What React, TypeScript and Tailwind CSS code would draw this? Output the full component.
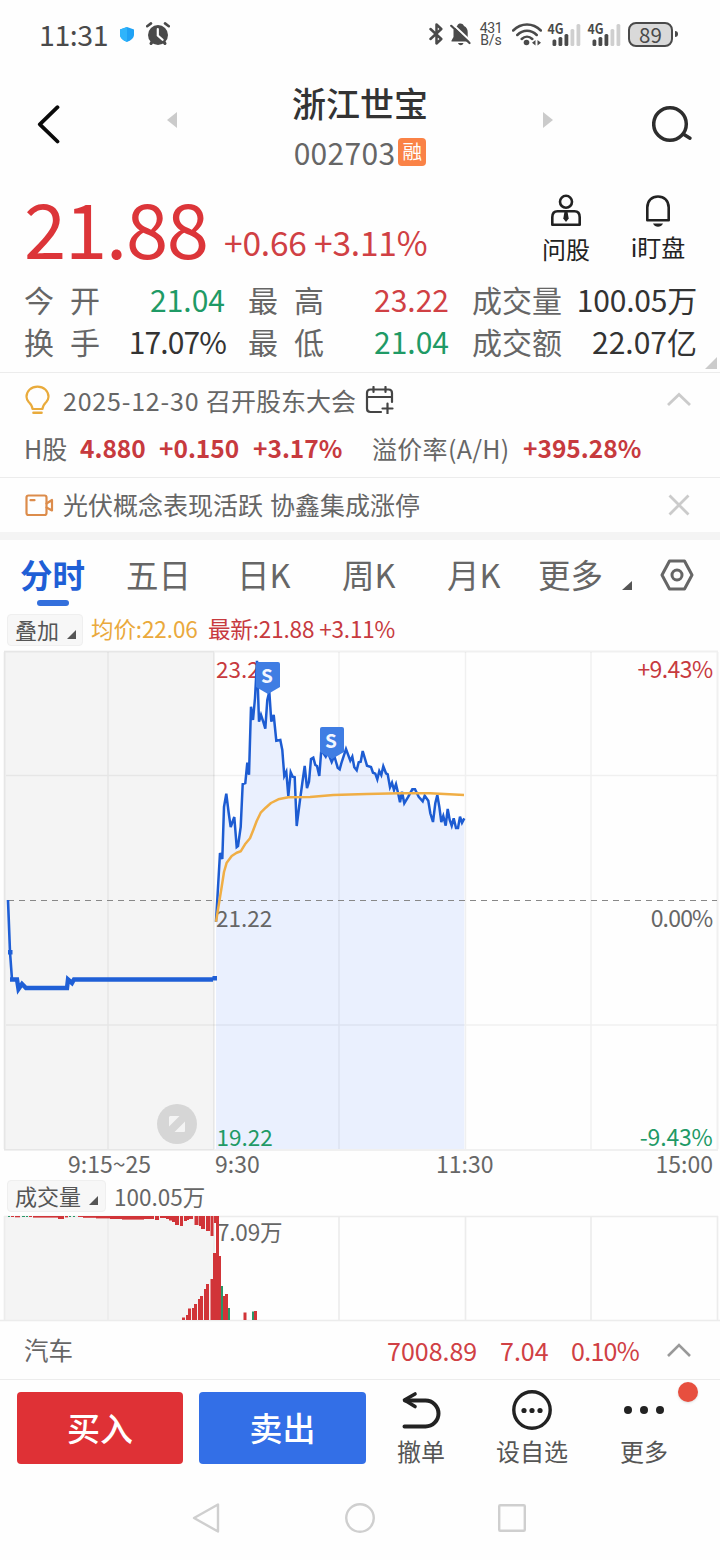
import React from 'react';
import clsx from 'clsx';

// [x, y] points of the price line after the open
const PRICE_LINE =
  '216,921.7 220,853 222.3,859 224,807 226.3,793.7 228.7,813 230.7,827 234.3,817 236.7,847 238,846 240.7,827 242.7,784 245.3,783 247.3,762.7 249,774.7 251,706.7 253,720 255,698 257,660.7 259,721.7 261,715 263,721 265.3,728.7 267.3,700 269.3,691.7 271.3,721.7 273.7,715 276.3,740.7 280.3,740 282.3,750 284.3,776 286.3,771.7 288.3,796 290.7,772.3 292.7,776.7 294.7,777.3 296.7,826 300,800 302.3,783 304.7,766 307,788 309,781.7 311,759 313.3,757.7 315.3,765 317,766 319.3,776 321.3,750 323.3,753 325.7,756.7 327.7,752 331.7,762 334.3,756 337.7,767.7 339.7,769.3 341.7,762 346,749 350.3,760.7 352.3,756.7 354.3,767.3 356.7,770.3 358.7,762.3 360.7,761.7 362.7,751 367,765.7 371,767 373,772.7 375.3,773.7 377.3,779.3 379.3,771 381.3,775 383.3,766.3 386,773.3 387.7,774.3 390,787.3 392,782.7 394,790 396,784.3 398.3,794 400,802.3 402,791.7 404.3,803.3 408.3,796.7 412.3,789.3 415,789.3 418.7,796.7 422.7,801.3 424.7,795.7 428.3,800.7 430.3,813.3 433,822 435.3,803.3 437.3,795 439.3,806.7 441.3,822 443.3,816 445.7,825.7 447.7,809 449.7,820 451.7,825.7 453.7,818.3 456,828 458,828 460,816.7 462,822.7 464.3,818.3';

const AVERAGE_LINE =
  '216,921.7 221.7,886.7 224,872 226.7,862.7 231.7,856 236.7,852.7 240.7,851.3 245,844.3 250,838.3 253.3,830 256.7,821 260.7,812.7 265.7,807.7 271,803 278.3,799.3 288.3,797.3 310,797 333.3,795 366.7,794 400,793.3 430,793.3 464,795';

const RED = '#d13438';
const GREEN = '#2a9668';

// x, width, height, colour, standing on the bottom edge
const VOLUME_BARS: [number, number, number, string][] = [
  [182, 3, 2.5, RED], [186, 2, 5, RED], [188, 3, 11.5, RED], [192, 2, 12, RED], [194, 3, 16, RED],
  [198, 2, 21, RED], [200, 3, 24, RED], [204, 2, 31, RED], [206, 3, 36, RED], [210.5, 3, 41, RED],
  [213, 3, 67, RED], [216, 3, 104, RED], [219, 2, 64, RED], [221, 2, 34, GREEN], [223, 2, 24, RED],
  [225, 3, 26, RED], [228, 2, 12, GREEN], [243.5, 3, 7.5, RED], [252, 2, 8.5, GREEN], [254, 3, 9, RED],
];

// x, width, depth, colour, hanging from the top edge
const AUCTION_BARS: [number, number, number, string][] = [
  [8, 2, 1, GREEN], [11, 3, 1, RED], [15, 5, 1.3, RED], [22, 3, 1, GREEN], [26, 2, 1, GREEN], [29, 3, 1, RED],
  [33, 25, 1.6, RED], [58, 6, 3, RED], [65, 3, 1.4, RED], [69, 2, 1, GREEN], [73, 2, 1, GREEN], [78, 5, 1, RED],
  [83, 13, 1.8, RED], [96, 14, 2.4, RED], [110, 12, 3, RED], [122, 22, 3.6, RED], [144, 10, 3, RED],
  [155, 4, 4, RED], [160, 6, 2, RED], [166, 3, 3, RED], [169, 3, 4.5, RED], [172, 3, 6, RED],
  [175, 4, 9, RED], [180, 3, 10, RED], [184, 3, 5, RED], [187, 2, 4, RED], [189, 4, 3, RED], [194.5, 4, 9, RED],
  [199, 2, 10, RED], [201, 4, 13, RED], [206, 4, 15, RED], [210.5, 3, 20, RED], [214, 2, 7, RED],
];

function StatusBar() {
  return (
    <header className="flex h-[68px] shrink-0 items-center pl-[39px] pr-[42px] text-[#4a4a4a]">
      <span className="w-[69px] text-[28.5px] font-normal leading-none tracking-[-0.4px]">11:31</span>
      <svg className="ml-[12px]" width="14" height="15" viewBox="0 0 14 15">
        <path d="M7 0 14 2.6v5C14 11 11 13.600 7 15 3 13.600 0 11 0 7.600v-5z" fill="#1fa2f5" />
        <path d="M7 0v15C3 13.600 0 11 0 7.600v-5z" fill="#2fb4fb" />
      </svg>
      <svg className="ml-[12px]" width="24" height="24" viewBox="0 0 24 24" fill="none">
        <circle cx="12" cy="13" r="10" fill="#4a4a4a" />
        <path d="M5 21.500 6.500 19.500M19 21.500l-1.500-2" stroke="#4a4a4a" strokeWidth="3" strokeLinecap="round" />
        <path d="M1.200 4.200 5 1.400M22.800 4.200 19 1.400" stroke="#4a4a4a" strokeWidth="2.600" strokeLinecap="round" />
        <path d="M11.800 7v6.500l4.800 4.300" stroke="#fff" strokeWidth="2.200" strokeLinecap="round" />
      </svg>
      <div className="ml-auto flex items-center">
        <svg width="14" height="22" viewBox="0 0 14 22" fill="none" stroke="#4a4a4a" strokeWidth="2.500" strokeLinejoin="round" strokeLinecap="round">
          <path d="M1.500 6 12.300 16 7.500 20.500V1.500L12.300 6 1.500 16" />
        </svg>
        <svg className="ml-[7px]" width="21" height="23" viewBox="0 0 21 23" fill="none">
          <path d="M3.500 7C4 5 5.500 4 7 3.200 8 1 9 .5 10.500 .5S13 1.200 14 3c2.500 1.200 3.700 3.200 3.700 6v5l2.300 3.500v1H1.500v-1l2-3.500z" fill="#4a4a4a" />
          <path d="M8 20h5.500c-.6 1.600-1.500 2.200-2.700 2.200S8.600 21.600 8 20z" fill="#4a4a4a" />
          <path d="M2.800 1.200 21 18.500" stroke="#fff" strokeWidth="2" />
          <path d="M1.200 2.800 19.500 20" stroke="#4a4a4a" strokeWidth="2.200" strokeLinecap="round" />
        </svg>
        <div className="ml-[8px] flex w-[24px] flex-col items-center font-[Roboto,sans-serif] text-[14px] leading-[12px]">
          <span className="tracking-[-0.300px]">431</span>
          <span>B/s</span>
        </div>
        <svg className="ml-[9px]" width="30" height="23" viewBox="0 0 30 23" fill="none" stroke="#4a4a4a" strokeWidth="2.500" strokeLinecap="round">
          <path d="M1.200 7.500c8-8 19.600-8 27.600 0M5.300 12c5.600-5.600 13.800-5.600 19.400 0M9.700 16c3.200-3 7.400-3 10.600 0" />
          <circle cx="14.500" cy="19.500" r="2.800" fill="#4a4a4a" stroke="none" />
          <path d="M23.500 17v5.500L20 19.700zM25.500 17v5.500l3.500-2.800z" fill="#4a4a4a" stroke="none" />
        </svg>
        <CellSignal className="ml-[6px] overflow-visible" />
        <CellSignal className="ml-[7px] overflow-visible" />
        <div className="ml-[7px] flex h-[25px] w-[45px] items-center justify-center rounded-[8px] border-2 border-[#4a4a4a] bg-[#d9d9d9] text-[20.500px] leading-none">
          <span>89</span>
        </div>
        <div className="ml-[2px] h-[6px] w-[3px] rounded-r bg-[#4a4a4a]" />
      </div>
    </header>
  );
}

function CellSignal({ className }: { className: string }) {
  return (
    <svg className={className} width="33" height="23" viewBox="0 0 33 23">
      <text x="-0.500" y="11" fontSize="14" fontWeight="700" fill="#4a4a4a" textLength="16" lengthAdjust="spacingAndGlyphs">4G</text>
      <rect x="4.500" y="16.500" width="3.800" height="6.500" rx="1.500" fill="#4a4a4a" />
      <rect x="10.500" y="14" width="3.800" height="9" rx="1.500" fill="#4a4a4a" />
      <rect x="16.500" y="11" width="3.800" height="12" rx="1.500" fill="#4a4a4a" />
      <rect x="22.500" y="6" width="3.800" height="17" rx="1.500" fill="#cfcfcf" />
      <rect x="28.500" y="1" width="3.800" height="22" rx="1.500" fill="#cfcfcf" />
    </svg>
  );
}

function TitleBar() {
  return (
    <div className="flex h-[112px] shrink-0 pl-[36px]">
      <svg className="mt-[36px]" width="25" height="40" viewBox="0 0 25 40" fill="none" stroke="#0a0a0a" strokeWidth="3.800" strokeLinecap="round" strokeLinejoin="round">
        <path d="M21.500 3.200 3.800 20.300 21.500 37.500" />
      </svg>
      <div className="ml-[106px] flex w-[386px] justify-between">
        <svg className="mt-[44px]" width="10" height="16" viewBox="0 0 10 16">
          <path d="M10 0v16L0 8z" fill="#cbcbcb" />
        </svg>
        <div className="flex w-[140px] flex-col items-center">
          <h1 className="mt-[18px] text-[34px] font-medium leading-[34px] text-[#333]">浙江世宝</h1>
          <div className="mt-[16px] flex items-center">
            <span className="text-[30px] leading-[32px] tracking-[0.3px] text-[#666]">002703</span>
            <span className="ml-[3px] flex size-[28px] items-center justify-center rounded-[4px] bg-[#fa8246] text-[19.500px] leading-none text-white">
              <span className="-mt-[2px]">融</span>
            </span>
          </div>
        </div>
        <svg className="mt-[44px]" width="10" height="16" viewBox="0 0 10 16">
          <path d="M0 0v16l10-8z" fill="#cbcbcb" />
        </svg>
      </div>
      <svg className="ml-[99px] mt-[37px]" width="42" height="38" viewBox="0 0 42 38" fill="none" stroke="#2d2d2d" strokeWidth="3.500" strokeLinecap="round">
        <circle cx="18" cy="19" r="16.300" />
        <path d="M32 29.500 38 33.200" />
      </svg>
    </div>
  );
}

function Stat({ label, value, spaced, className }: { label: string; value: string; spaced?: boolean; className: string }) {
  return (
    <div className="flex h-[42px] items-center justify-between leading-[42px]">
      <span className={clsx('flex text-[30px] text-[#666]', spaced && 'w-[76px] justify-between')}>
        {spaced ? label.split('').map((c) => <span key={c}>{c}</span>) : label}
      </span>
      <span className={className}>{value}</span>
    </div>
  );
}

function Quote() {
  return (
    <section className="relative h-[193px] shrink-0 border-b border-[#ececec]">
      <div className="flex h-[98px] pl-[24px]">
        <span className="mt-[8px] w-[200px] text-[76px] leading-[76px] tracking-[-1.200px] text-[#dc3539]">21.88</span>
        <span className="mt-[42px] w-[310px] whitespace-pre text-[33.500px] leading-[40px] tracking-[-0.200px] text-[#d04044]">+0.66 +3.11%</span>
        <div className="mt-[14px] flex w-[64px] flex-col items-center">
          <svg width="32" height="34" viewBox="0 0 32 34" fill="none" stroke="#222" strokeWidth="2.600">
            <circle cx="16" cy="7.800" r="6" />
            <path d="M7.500 17.300h17c3.500 0 5.200 2.500 5.200 6v7.400H2.300v-7.400c0-3.500 1.700-6 5.200-6z" strokeLinejoin="round" />
            <path d="M14.500 17.500h3l1.200 7-2.700 3.500-2.700-3.500z" fill="#222" stroke="none" />
          </svg>
          <span className="mt-[9px] text-[24px] leading-[24px] text-[#222]">问股</span>
        </div>
        <div className="ml-[28px] mt-[14px] flex w-[64px] flex-col items-center">
          <svg width="28" height="34" viewBox="0 0 28 34" fill="none" stroke="#222" strokeWidth="2.600" strokeLinejoin="round">
            <path d="M3.300 26.300V13.500C3.300 6.500 8 2.500 14 2.500s10.700 4 10.700 11v12.800z" />
            <path d="M9 29.500h10c-1 2.300-3 3.200-5 3.200s-4-.9-5-3.200z" fill="#222" stroke="none" />
          </svg>
          <span className="mt-[7px] text-[24px] leading-[24px] text-[#222]">i盯盘</span>
        </div>
      </div>
      <div className="grid grid-cols-[201px_201px_225px] gap-x-[23px] pl-[24px]">
        <Stat label="今开" spaced value="21.04" className="text-[30px] text-[#1f9a66]" />
        <Stat label="最高" spaced value="23.22" className="text-[30px] text-[#d04044]" />
        <Stat label="成交量" value="100.05万" className="text-[30px] tracking-[-0.200px] text-[#333]" />
        <Stat label="换手" spaced value="17.07%" className="mr-[-1px] text-[30px] tracking-[-0.900px] text-[#333]" />
        <Stat label="最低" spaced value="21.04" className="text-[30px] text-[#1f9a66]" />
        <Stat label="成交额" value="22.07亿" className="text-[30px] text-[#333]" />
      </div>
      <svg className="absolute bottom-[3px] right-[3px]" width="12" height="12" viewBox="0 0 12 12">
        <path d="M12 0v12H0z" fill="#cbcbcb" />
      </svg>
    </section>
  );
}

function Notices() {
  return (
    <section className="flex shrink-0 flex-col text-[25px] text-[#666]">
      <div className="flex h-[54px] items-center pl-[25px] pr-[28px]">
        <svg width="25" height="30" viewBox="0 0 25 30" fill="none" stroke="#e9ab3c" strokeWidth="2.200" strokeLinecap="round">
          <path d="M7.500 24c0-3-1.800-4.800-3.800-7C2.200 15.200 1.500 13.700 1.500 11.800 1.500 6 6.300 1.600 12.500 1.600S23.500 6 23.500 11.800c0 1.900-.7 3.400-2.200 5.200-2 2.200-3.800 4-3.800 7z" strokeLinejoin="round" />
          <path d="M8.500 27.800h8" strokeWidth="2.600" />
        </svg>
        <span className="ml-[13px] w-[143px] leading-[30px] tracking-[0.800px]">2025-12-30</span>
        <span className="leading-[30px]">召开股东大会</span>
        <svg className="ml-[9px]" width="29" height="28" viewBox="0 0 29 28" fill="none" stroke="#444" strokeWidth="2.200" strokeLinecap="round">
          <path d="M16 26H5.500C3 26 2 25 2 22.500V7c0-2.500 1-3.500 3.500-3.500h18C26 3.500 27 4.500 27 7v9M2 11h25M8.500 1v5M20.500 1v5M17.500 22.500h10M22.500 17.500v10" />
        </svg>
        <svg className="ml-auto mt-[-3px]" width="26" height="16" viewBox="0 0 26 16" fill="none" stroke="#cbcbcb" strokeWidth="2.800">
          <path d="M2 14 13 3.500 24 14" />
        </svg>
      </div>
      <div className="flex h-[51px] items-start border-b border-[#ececec] pl-[24px] pt-[7px] leading-[28px]">
        <span className="w-[56px]">H股</span>
        <span className="w-[79px] text-[24.500px] font-bold text-[#c73a3e]">4.880</span>
        <span className="w-[94px] text-[24.500px] font-bold text-[#c73a3e]">+0.150</span>
        <span className="w-[119px] text-[24.500px] font-bold text-[#c73a3e]">+3.17%</span>
        <span className="w-[151px] tracking-[0.300px]">溢价率(A/H)</span>
        <span className="text-[24.500px] font-bold text-[#c73a3e]">+395.28%</span>
      </div>
      <div className="flex h-[54px] items-center pl-[25px] pr-[28px]">
        <svg width="29" height="23" viewBox="0 0 29 23" fill="none" stroke="#dc8c4b" strokeWidth="2.200" strokeLinecap="round" strokeLinejoin="round">
          <rect x="1.500" y="1.500" width="20" height="19.500" rx="2" />
          <path d="M5.500 6.200h4M21.500 9.500 27 6v10.500L21.500 13.500" />
        </svg>
        <span className="ml-[9px] mt-[-2px] w-[207px] leading-[30px]">光伏概念表现活跃</span>
        <span className="mt-[-2px] leading-[30px]">协鑫集成涨停</span>
        <svg className="ml-auto" width="26" height="24" viewBox="0 0 26 24" fill="none" stroke="#cbcbcb" strokeWidth="2.800">
          <path d="M3.500 2.500 22.500 21.500M22.500 2.500 3.500 21.500" />
        </svg>
      </div>
      <div className="h-[8px] bg-[#f4f4f4]" />
    </section>
  );
}

function ChartTabs() {
  return (
    <nav className="flex h-[74px] shrink-0 pl-[20px] text-[32.500px] leading-[40px] text-[#666]">
      <div className="flex w-[106px] flex-col pt-[14px] font-bold text-[#1f5fd6]">
        <span>分时</span>
        <div className="ml-[17px] mt-[6px] h-[6px] w-[32px] rounded-full bg-[#336fdc]" />
      </div>
      <span className="w-[111px] pt-[14px]">五日</span>
      <span className="w-[105px] pt-[14px]">日K</span>
      <span className="w-[105px] pt-[14px]">周K</span>
      <span className="w-[91px] pt-[14px]">月K</span>
      <span className="w-[84px] pt-[14px]">更多</span>
      <svg className="mt-[41px]" width="10" height="9" viewBox="0 0 10 9">
        <path d="M10 0v9H0z" fill="#555" />
      </svg>
      <svg className="ml-[28px] mt-[19px]" width="34" height="32" viewBox="0 0 34 32" fill="none" stroke="#666" strokeWidth="3">
        <path d="M9.500 2h15L32 16l-7.500 14h-15L2 16z" strokeLinejoin="round" />
        <circle cx="17" cy="16" r="5" />
      </svg>
    </nav>
  );
}

function Picker({ label, className }: { label: string; className: string }) {
  return (
    <div className={clsx('flex h-[32px] items-center rounded-[4px] border border-[#efefef] bg-[#f7f7f7] pl-[7px]', className)}>
      <span className="-mt-[2px] text-[22px] leading-[28px] text-[#555]">{label}</span>
      <svg className="ml-[8px] mt-[8px]" width="9" height="9" viewBox="0 0 9 9">
        <path d="M9 0v9H0z" fill="#555" />
      </svg>
    </div>
  );
}

function SellFlag({ x, y }: { x: number; y: number }) {
  return (
    <g transform={`translate(${x} ${y})`}>
      <path d="M0 2a2 2 0 0 1 2-2h20a2 2 0 0 1 2 2v23L12 32 0 25z" fill="#3f7de3" />
      <text x="11" y="20.500" textAnchor="middle" fontSize="19" fontWeight="700" fill="#f2f6ff">S</text>
    </g>
  );
}

function PriceChart() {
  return (
    <svg className="shrink-0" width="720" height="531" viewBox="0 649 720 531">
      <rect x="4" y="651" width="210" height="499" fill="#f4f4f4" />
      <polygon points={`216,1149 ${PRICE_LINE} 464.300,1149`} fill="#eaf0fe" />
      <g stroke="#000" strokeOpacity="0.055" strokeWidth="2">
        <path d="M4 651.500h714M4 1150h714M4.500 652v497M717.500 652v497M214 652v497" />
        <path d="M108 652v497M339 652v497M465.500 652v497M591 652v497M6 775.500h711M6 1025h711" strokeWidth="1.500" />
      </g>
      <path d="M8 900.500h709" stroke="#888" strokeWidth="1.200" strokeDasharray="6 5" />
      <g fontSize="23" fill="#666">
        <text x="216" y="677.500" fontSize="22.500" fill="#c73a3e">23.22</text>
        <text x="216" y="926.500" fontSize="22.500">21.22</text>
        <text x="216.500" y="1145.500" fontSize="22.500" fill="#1f9a66">19.22</text>
        <g textAnchor="end">
          <text x="712.500" y="677.500" letterSpacing="-0.600" fill="#c73a3e">+9.43%</text>
          <text x="712.500" y="926.500" letterSpacing="-0.800">0.00%</text>
          <text x="712.500" y="1145.500" letterSpacing="-0.200" fill="#1f9a66">-9.43%</text>
          <text x="713" y="1173">15:00</text>
        </g>
        <text x="68" y="1173">9:15~25</text>
        <text x="215" y="1173">9:30</text>
        <text x="436" y="1173">11:30</text>
      </g>
      <g fill="none" strokeLinejoin="miter">
        <polyline points="8,900 10,952 12,979.5" stroke="#1f5fd6" strokeWidth="2.600" />
        <rect x="8" y="950" width="4.500" height="4.500" fill="#1f5fd6" />
        <polyline points="10,979.5 17,979.5 18.500,989 22,984 26,988 67,988 68,979.500 72,983 74,979.500 213,979.500" stroke="#1f5fd6" strokeWidth="4.400" />
        <rect x="212.500" y="976" width="4.500" height="4.500" fill="#1f5fd6" />
        <polyline points={PRICE_LINE} stroke="#1d5cd2" strokeWidth="2.500" />
        <polyline points={AVERAGE_LINE} stroke="#f0ae45" strokeWidth="2.500" strokeLinejoin="round" />
      </g>
      <SellFlag x={256} y={662} />
      <SellFlag x={320} y={727} />
      <circle cx="177" cy="1124" r="20" fill="#d6d6d6" />
      <path d="M170 1116h9.500l-10.500 10.500v-9.500zM185 1121.500v9.500a1 1 0 0 1-1 1H174.500z" fill="#f4f4f4" />
    </svg>
  );
}

function VolumeChart() {
  return (
    <svg className="shrink-0 overflow-visible" width="720" height="105" viewBox="0 1216 720 105">
      <rect x="4" y="1216" width="210" height="104" fill="#f4f4f4" />
      <path d="M4 1216.500h714M4.500 1216v104M717.500 1216v104M214 1216v104M108 1216v104M339 1216v104M465.500 1216v104M591 1216v104M0 1320.500h720" stroke="#ececec" strokeWidth="1.600" />
      <text x="217" y="1240.500" fontSize="22.500" letterSpacing="-0.200" fill="#666">7.09万</text>
      {AUCTION_BARS.map(([x, w, h, fill]) => (
        <rect key={x} x={x} y="1216" width={w} height={h} fill={fill} />
      ))}
      {VOLUME_BARS.map(([x, w, h, fill]) => (
        <rect key={x} x={x} y={1320 - h} width={w} height={h} fill={fill} />
      ))}
    </svg>
  );
}

function IndexRow() {
  return (
    <div className="flex h-[59px] shrink-0 items-center border-b border-[#ececec] pl-[24px] pr-[28px] text-[25px] leading-[58px] text-[#d04044]">
      <span className="w-[363px] text-[24.500px] text-[#666]">汽车</span>
      <span className="w-[113px]">7008.89</span>
      <span className="w-[71px]">7.04</span>
      <span className="tracking-[-0.700px]">0.10%</span>
      <svg className="ml-auto" width="26" height="16" viewBox="0 0 26 16" fill="none" stroke="#999" strokeWidth="2.600">
        <path d="M2 14 13 3 24 14" />
      </svg>
    </div>
  );
}

function Action({ label, className, children }: { label: string; className: string; children: React.ReactNode }) {
  return (
    <div className={clsx('flex flex-col items-center', className)}>
      <div className="flex h-[42px] items-center">{children}</div>
      <span className="mt-[8px] text-[24px] leading-[24px] text-[#555]">{label}</span>
    </div>
  );
}

function ActionBar() {
  return (
    <div className="relative flex h-[96px] shrink-0 pl-[17px]">
      <button className="mt-[12px] h-[72px] w-[166px] rounded-[4px] bg-[#df3136] text-[33px] font-medium text-white">买入</button>
      <button className="ml-[16px] mt-[12px] h-[72px] w-[167px] rounded-[4px] bg-[#336fe7] text-[33px] font-medium text-white">卖出</button>
      <Action label="撤单" className="ml-[7px] mt-[9px] w-[96px]">
        <svg width="40" height="38" viewBox="0 0 40 38" fill="none" stroke="#222" strokeWidth="4" strokeLinecap="round" strokeLinejoin="round">
          <path d="M14 3 3.500 9 14 15.500" strokeWidth="3.600" />
          <path d="M4 9.500h20.500a13 13 0 0 1 0 26H3.500" />
        </svg>
      </Action>
      <Action label="设自选" className="ml-[15px] mt-[9px] w-[96px]">
        <svg width="40" height="40" viewBox="0 0 40 40" fill="#222">
          <circle cx="20" cy="20" r="18.200" fill="none" stroke="#222" strokeWidth="3.400" />
          <circle cx="12" cy="20.500" r="2.600" />
          <circle cx="20" cy="20.500" r="2.600" />
          <circle cx="28" cy="20.500" r="2.600" />
        </svg>
      </Action>
      <Action label="更多" className="ml-[16px] mt-[9px] w-[96px]">
        <svg width="40" height="10" viewBox="0 0 40 10" fill="#222">
          <circle cx="4" cy="5" r="4" />
          <circle cx="20" cy="5" r="4" />
          <circle cx="36" cy="5" r="4" />
        </svg>
      </Action>
      <div className="absolute right-[22px] top-[2px] size-[20px] rounded-full bg-[#e74f3f] shadow-sm" />
    </div>
  );
}

function SystemNav() {
  return (
    <div className="flex h-[84px] shrink-0 items-center justify-center gap-[122px] pr-[3px]">
      <svg width="32" height="32" viewBox="0 0 32 32" fill="none" stroke="#cfcfcf" strokeWidth="2.400" strokeLinejoin="round">
        <path d="M27 2.500v27L3 16z" />
      </svg>
      <svg width="30" height="32" viewBox="0 0 30 32" fill="none" stroke="#cfcfcf" strokeWidth="2.400">
        <circle cx="15" cy="16" r="13.800" />
      </svg>
      <svg width="30" height="32" viewBox="0 0 30 32" fill="none" stroke="#cfcfcf" strokeWidth="2.400">
        <rect x="2.200" y="3.200" width="25.600" height="25.600" rx="1" />
      </svg>
    </div>
  );
}

export default function App() {
  return (
    <div className="flex h-[1560px] w-[720px] flex-col overflow-hidden bg-[#fefefe] font-['Noto_Sans_CJK_SC',sans-serif]">
      <StatusBar />
      <TitleBar />
      <Quote />
      <Notices />
      <ChartTabs />
      <div className="flex h-[35px] shrink-0 pl-[7px] text-[22.500px] leading-[29px]">
        <Picker label="叠加" className="w-[76px]" />
        <span className="ml-[8px] w-[117px] tracking-[-0.100px] text-[#eaa93c]">均价:22.06</span>
        <span className="tracking-[-0.150px] text-[#c73a3e]">最新:21.88 +3.11%</span>
      </div>
      <PriceChart />
      <div className="flex h-[36px] shrink-0 pl-[7px] text-[22.500px] leading-[33px] text-[#666]">
        <Picker label="成交量" className="w-[99px]" />
        <span className="ml-[8px]">100.05万</span>
      </div>
      <VolumeChart />
      <IndexRow />
      <ActionBar />
      <SystemNav />
    </div>
  );
}
